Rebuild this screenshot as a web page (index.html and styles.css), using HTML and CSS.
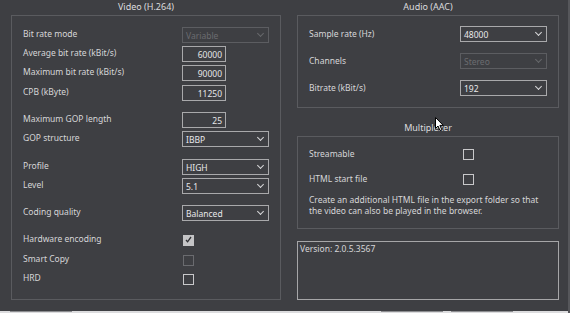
FILE: index.html
```html
<!DOCTYPE html>
<html>
<head>
<meta charset="utf-8">
<link rel="stylesheet" href="styles.css">
</head>
<body>
<div class="window">
  <div class="col">
    <div class="group-title">Video (H.264)</div>
    <div class="box video">
      <div class="row"><span class="lbl">Bit rate mode</span><div class="select disabled"><span>Variable</span><i class="chev"></i></div></div>
      <div class="row"><span class="lbl">Average bit rate (kBit/s)</span><div class="num">60000</div></div>
      <div class="row"><span class="lbl">Maximum bit rate (kBit/s)</span><div class="num">90000</div></div>
      <div class="row m4"><span class="lbl">CPB (kByte)</span><div class="num">11250</div></div>
      <div class="row m11"><span class="lbl">Maximum GOP length</span><div class="num">25</div></div>
      <div class="row"><span class="lbl">GOP structure</span><div class="select"><span>IBBP</span><i class="chev"></i></div></div>
      <div class="row m12"><span class="lbl">Profile</span><div class="select"><span>HIGH</span><i class="chev"></i></div></div>
      <div class="row"><span class="lbl">Level</span><div class="select"><span>5.1</span><i class="chev"></i></div></div>
      <div class="row m11"><span class="lbl">Coding quality</span><div class="select"><span>Balanced</span><i class="chev"></i></div></div>
      <div class="row m11"><span class="lbl">Hardware encoding</span><div class="check checked"><svg viewBox="0 0 11 11" width="11" height="11"><path d="M3 6 L4.6 7.8 L8 3" fill="none" stroke="#2e2f33" stroke-width="1.3"/></svg></div></div>
      <div class="row m4"><span class="lbl">Smart Copy</span><div class="check disabled"></div></div>
      <div class="row"><span class="lbl">HRD</span><div class="check"></div></div>
    </div>
  </div>
  <div class="col">
    <div class="group-title">Audio (AAC)</div>
    <div class="box audio">
      <div class="row"><span class="lbl">Sample rate (Hz)</span><div class="select"><span>48000</span><i class="chev"></i></div></div>
      <div class="row m11"><span class="lbl">Channels</span><div class="select disabled"><span>Stereo</span><i class="chev"></i></div></div>
      <div class="row m11"><span class="lbl">Bitrate (kBit/s)</span><div class="select"><span>192</span><i class="chev"></i></div></div>
    </div>
    <div class="group-title mux-title">Multiplexer</div>
    <div class="box mux">
      <div class="row crow"><span class="lbl">Streamable</span><div class="check"></div></div>
      <div class="row crow second"><span class="lbl">HTML start file</span><div class="check"></div></div>
      <p class="desc">Create an additional HTML file in the export folder so that the video can also be played in the browser.</p>
    </div>
    <div class="version">Version: 2.0.5.3567</div>
  </div>
</div>
<div class="footer">
  <div class="btn b1"></div>
  <div class="spacer"></div>
  <div class="btn b2"></div>
  <div class="btn b3"></div>
</div>
<svg class="cursor" width="10" height="15" viewBox="0 0 10 15"><path d="M0.5 0.5 L0.5 11.5 L3 9 L5 13.5 L6.8 12.7 L4.9 8.4 L8.3 8.4 Z" fill="#fff" stroke="#000" stroke-width="1"/></svg>
</body>
</html>
```
FILE: styles.css
```css
html, body {
  margin: 0;
  padding: 0;
}
body {
  width: 570px;
  height: 313px;
  background: #3e3f43;
  font-family: "Noto Sans", "Open Sans", sans-serif;
  font-size: 8.5px;
  color: #d6d6d8;
  position: relative;
  overflow: hidden;
  box-sizing: border-box;
  border-right: 2px solid #56575b;
}
.window {
  display: grid;
  grid-template-columns: 270px 262px;
  column-gap: 16px;
  padding-left: 11px;
  height: 311px;
}
.group-title {
  height: 15px;
  line-height: 13px;
  text-align: center;
  font-size: 9px;
  color: #dcdcde;
}
.box {
  border: 1px solid #5a5b5f;
  box-sizing: border-box;
}
.video {
  height: 285px;
  padding: 11px 0 0 11px;
}
.audio {
  height: 93px;
  padding: 10px 0 0 11px;
}
.mux-title {
  height: 28px;
  padding-top: 13px;
  box-sizing: border-box;
}
.mux {
  height: 93px;
  padding: 11px 0 0 11px;
}
.row {
  display: flex;
  align-items: center;
  height: 16px;
  margin-top: 3px;
}
.row:first-child { margin-top: 0; }
.row.m4 { margin-top: 4px; }
.row.m11 { margin-top: 11px; }
.row.m12 { margin-top: 12px; }
.lbl {
  width: 159px;
  flex: none;
  margin-bottom: 4px;
  white-space: nowrap;
}
.audio .lbl { width: 151px; margin-bottom: 2px; }
.mux .lbl { width: 153px; margin-bottom: 2px; }
.num {
  width: 44px;
  height: 16px;
  box-sizing: border-box;
  border: 1px solid #a9a9ab;
  text-align: right;
  padding-right: 3px;
  line-height: 15px;
  color: #e6e6e8;
}
.select {
  width: 87px;
  height: 16px;
  box-sizing: border-box;
  border: 1px solid #a9a9ab;
  display: flex;
  align-items: center;
  justify-content: space-between;
  padding: 0 5px 0 3px;
  color: #e8e8ea;
}
.select span { line-height: 14px; padding-top: 1px; }
.chev {
  width: 4px;
  height: 4px;
  border-right: 1.2px solid #d8d8da;
  border-bottom: 1.2px solid #d8d8da;
  transform: rotate(45deg);
  margin-top: -3px;
}
.select.disabled {
  border-color: #5c5d61;
  color: #6b6c70;
}
.select.disabled .chev { border-color: #67686c; }
.check {
  width: 11px;
  height: 11px;
  box-sizing: border-box;
  border: 1.5px solid #c8c8ca;
  margin-left: 1px;
  position: relative;
}
.check svg { position: absolute; left: -1.5px; top: -1.5px; }
.check.checked {
  background: #c4c4c6;
  border-color: #c4c4c6;
}
.check.disabled { border-color: #6a6b6f; }
.crow { height: 12px; }
.crow.second { margin-top: 13px; }
.desc {
  margin: 9px 0 0 0;
  line-height: 11px;
  width: 240px;
}
.version {
  margin-top: 12px;
  height: 59px;
  border: 1px solid #a6a6a8;
  box-sizing: border-box;
  padding: 1px 2px;
  line-height: 11px;
}
.footer {
  height: 2px;
  background: #dcdcde;
  display: flex;
  padding-left: 10px;
}
.btn { height: 1px; background: #8c8d90; }
.b1 { width: 62px; }
.spacer { width: 309px; }
.b2 { width: 62px; }
.b3 { width: 62px; margin-left: 8px; }
.cursor {
  position: absolute;
  left: 435px;
  top: 117px;
}
```
